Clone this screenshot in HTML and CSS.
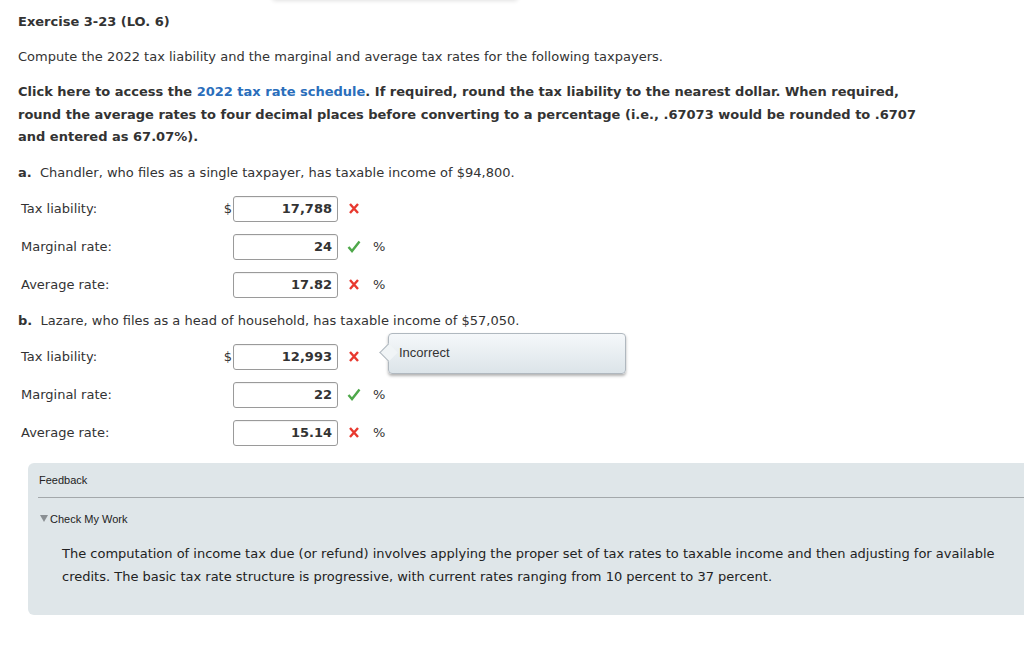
FILE: index.html
```html
<!DOCTYPE html>
<html>
<head>
<meta charset="utf-8">
<link rel="stylesheet" href="styles.css">
</head>
<body>
<div class="top-shadow"></div>
<div class="page">
  <h1 class="title">Exercise 3-23 (LO. 6)</h1>
  <p class="intro">Compute the 2022 tax liability and the marginal and average tax rates for the following taxpayers.</p>
  <p class="instr">Click here to access the <span class="link">2022 tax rate schedule</span>. If required, round the tax liability to the nearest dollar. When required, round the average rates to four decimal places before converting to a percentage (i.e., .67073 would be rounded to .6707 and entered as 67.07%).</p>

  <p class="part"><b>a.</b>&nbsp; Chandler, who files as a single taxpayer, has taxable income of $94,800.</p>
  <div class="rows">
    <div class="row">
      <span class="label">Tax liability:</span><span class="cur">$</span>
      <span class="field">17,788</span>
      <span class="mark"><svg width="10" height="11" viewBox="0 0 10 11"><path d="M1 1 L9 10 M9 1 L1 10" stroke="#e8392f" stroke-width="2.4" fill="none"/></svg></span>
    </div>
    <div class="row">
      <span class="label">Marginal rate:</span><span class="cur"></span>
      <span class="field">24</span>
      <span class="mark"><svg width="14" height="13" viewBox="0 0 14 13"><path d="M1.5 7 L5 11 L12.5 1.5" stroke="#4ea84a" stroke-width="2.4" fill="none"/></svg></span><span class="unit">%</span>
    </div>
    <div class="row">
      <span class="label">Average rate:</span><span class="cur"></span>
      <span class="field">17.82</span>
      <span class="mark"><svg width="10" height="11" viewBox="0 0 10 11"><path d="M1 1 L9 10 M9 1 L1 10" stroke="#e8392f" stroke-width="2.4" fill="none"/></svg></span><span class="unit">%</span>
    </div>
  </div>

  <p class="part"><b>b.</b>&nbsp; Lazare, who files as a head of household, has taxable income of $57,050.</p>
  <div class="rows">
    <div class="row">
      <span class="label">Tax liability:</span><span class="cur">$</span>
      <span class="field">12,993</span>
      <span class="mark"><svg width="10" height="11" viewBox="0 0 10 11"><path d="M1 1 L9 10 M9 1 L1 10" stroke="#e8392f" stroke-width="2.4" fill="none"/></svg></span>
      <div class="tip"><span class="tip-arrow"></span>Incorrect</div>
    </div>
    <div class="row">
      <span class="label">Marginal rate:</span><span class="cur"></span>
      <span class="field">22</span>
      <span class="mark"><svg width="14" height="13" viewBox="0 0 14 13"><path d="M1.5 7 L5 11 L12.5 1.5" stroke="#4ea84a" stroke-width="2.4" fill="none"/></svg></span><span class="unit">%</span>
    </div>
    <div class="row">
      <span class="label">Average rate:</span><span class="cur"></span>
      <span class="field">15.14</span>
      <span class="mark"><svg width="10" height="11" viewBox="0 0 10 11"><path d="M1 1 L9 10 M9 1 L1 10" stroke="#e8392f" stroke-width="2.4" fill="none"/></svg></span><span class="unit">%</span>
    </div>
  </div>

  <div class="feedback">
    <div class="fb-head">Feedback</div>
    <div class="fb-toggle"><span class="tri"></span>Check My Work</div>
    <p class="fb-text">The computation of income tax due (or refund) involves applying the proper set of tax rates to taxable income and then adjusting for available credits. The basic tax rate structure is progressive, with current rates ranging from 10 percent to 37 percent.</p>
  </div>
</div>
</body>
</html>
```

FILE: styles.css
```css
html, body {
  margin: 0;
  padding: 0;
  background: #fff;
  overflow: hidden;
}
body {
  font-family: "DejaVu Sans", Verdana, sans-serif;
  font-size: 13px;
  color: #333;
  width: 1024px;
  height: 647px;
  position: relative;
}
.top-shadow {
  position: absolute;
  left: 272px;
  top: -10px;
  width: 246px;
  height: 10px;
  box-shadow: 0 1px 4px rgba(0,0,0,0.12);
  border-radius: 4px;
}
.page {
  padding: 11px 0 0 18px;
}
.title {
  font-size: 13px;
  font-weight: bold;
  line-height: 22px;
  margin: 0;
}
.intro {
  margin: 13px 0 0;
  line-height: 22px;
}
.instr {
  margin: 13px 0 0;
  font-weight: bold;
  line-height: 22.5px;
  width: 900px;
}
.link {
  color: #2a6ebb;
}
.part {
  margin: 13px 0 0;
  line-height: 22px;
}
.rows {
  display: flex;
  flex-direction: column;
  gap: 12px;
  margin-top: 12px;
}
.row {
  display: flex;
  align-items: center;
  height: 26px;
  position: relative;
}
.rows + .part {
  margin-top: 12px;
}
.label {
  width: 199px;
  padding-left: 3px;
}
.cur {
  width: 12px;
  text-align: right;
  padding-right: 1px;
}
.field {
  box-sizing: border-box;
  width: 105px;
  height: 26px;
  border: 1px solid #9a9a9a;
  border-radius: 3px;
  box-shadow: inset 0 1px 1px rgba(0,0,0,0.06);
  text-align: right;
  font-weight: bold;
  line-height: 24px;
  padding-right: 5px;
  color: #333;
}
.mark {
  width: 14px;
  margin-left: 9px;
  display: flex;
  justify-content: center;
  align-items: center;
}
.unit {
  margin-left: 12px;
}
.tip {
  position: absolute;
  left: 370px;
  top: -11px;
  width: 238px;
  height: 41px;
  box-sizing: border-box;
  border: 1px solid #b0b8bf;
  border-radius: 4px;
  background: linear-gradient(#f5f8fa, #dce4e9);
  box-shadow: 0 2px 3px rgba(0,0,0,0.3);
  font-family: "Liberation Sans", Arial, sans-serif;
  font-size: 13px;
  color: #333;
  padding: 11px 0 0 10px;
  line-height: 16px;
}
.tip-arrow {
  position: absolute;
  left: -7px;
  top: 12px;
  width: 12px;
  height: 12px;
  background: #f0f4f6;
  border-left: 1px solid #b0b8bf;
  border-bottom: 1px solid #b0b8bf;
  transform: rotate(45deg);
}
.feedback {
  margin: 17px 0 0 10px;
  width: 1010px;
  height: 152px;
  box-sizing: border-box;
  background: #dfe6e9;
  border-radius: 6px;
  padding: 9px 0 0 10px;
  font-family: "Liberation Sans", Arial, sans-serif;
  font-size: 11px;
  color: #222;
}
.fb-head {
  line-height: 16px;
  padding-left: 1px;
  padding-bottom: 9px;
  border-bottom: 1px solid #a3a8ab;
}
.fb-toggle {
  margin-top: 13px;
  line-height: 16px;
  display: flex;
  align-items: center;
}
.tri {
  width: 0;
  height: 0;
  border-left: 4px solid transparent;
  border-right: 4px solid transparent;
  border-top: 7px solid #8a8f93;
  margin: 0 2px 0 2px;
}
.fb-text {
  margin: 15px 0 0 24px;
  width: 950px;
  font-family: "DejaVu Sans", Verdana, sans-serif;
  font-size: 13px;
  line-height: 23px;
  color: #222;
}
```
